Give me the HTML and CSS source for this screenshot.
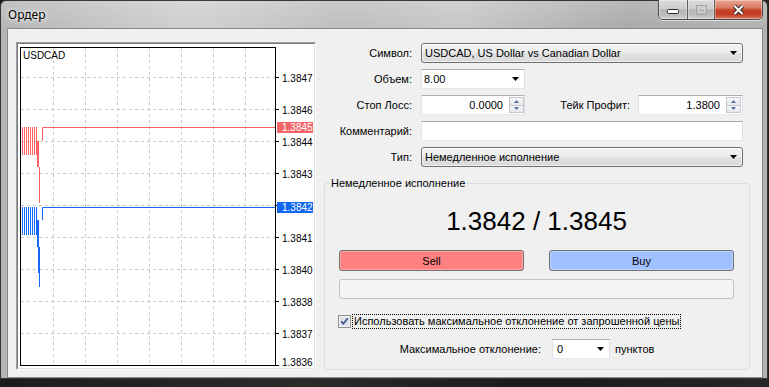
FILE: index.html
```html
<!DOCTYPE html>
<html lang="ru">
<head>
<meta charset="utf-8">
<title>Ордер</title>
<link rel="stylesheet" href="styles.css">
</head>
<body>
<div class="window">
  <div class="titlebar">
    <span class="title">Ордер</span>
    <div class="controls">
      <div class="cbtn cmin"><svg width="12" height="5" viewBox="0 0 12 5"><rect x="0.5" y="0.5" width="11" height="4" rx="1" fill="#fff" stroke="#2b2b2b"/></svg></div>
      <div class="cbtn cmax"><svg width="11" height="10" viewBox="0 0 11 10"><rect x="0.5" y="0.5" width="10" height="9" fill="none" stroke="#a4a4a4"/><rect x="2.5" y="3.5" width="6" height="4" fill="none" stroke="#d2d2d2"/></svg></div>
      <div class="cbtn cclose"><svg width="13" height="12" viewBox="0 0 13 12"><path d="M2.5 2L10.5 10M10.5 2L2.5 10" stroke="#3a2a2a" stroke-width="4"/><path d="M2.5 2L10.5 10M10.5 2L2.5 10" stroke="#fff" stroke-width="2"/></svg></div>
    </div>
  </div>
  <div class="client">
    <div class="chart">
      <div class="chart-inner">
        <svg class="plot" width="296" height="324" viewBox="0 0 296 324">
          <g stroke="#c9c9c9" stroke-dasharray="3 3" fill="none">
            <path d="M3 33.5H257M3 65.5H257M3 97.5H257M3 129.5H257M3 161.5H257M3 193.5H257M3 225.5H257M3 257.5H257M3 289.5H257"/>
            <path d="M35.5 4V321M67.5 4V321M99.5 4V321M131.5 4V321M163.5 4V321M195.5 4V321M227.5 4V321"/>
          </g>
          <rect x="2.5" y="3.5" width="255" height="318" fill="none" stroke="#000"/>
          <path d="M258 33.5H261M258 65.5H261M258 97.5H261M258 129.5H261M258 161.5H261M258 193.5H261M258 225.5H261M258 257.5H261M258 289.5H261M258 321.5H261" stroke="#000"/>
          <g stroke="#ff6262" fill="none">
            <path d="M4.5 83V111M6.5 83V111M8.5 83V111M10.5 83V111M12.5 83V111M14.5 83V111M16.5 83V111M18.5 83V111"/>
            <path d="M257 83.5H24.5V97M19.5 97V123M20.5 97V123M21.5 123V159"/>
          </g>
          <g stroke="#1468f5" fill="none">
            <path d="M4.5 163V191M6.5 163V191M8.5 163V191M10.5 163V191M12.5 163V191M14.5 163V191M16.5 163V191M18.5 163V191"/>
            <path d="M257 163.5H24.5V176M19.5 176V203M20.5 176V229M21.5 203V243"/>
          </g>
          <g class="axis">
            <text x="5" y="15" class="sym">USDCAD</text>
            <text x="264" y="37.5">1.3847</text>
            <text x="264" y="69.5">1.3846</text>
            <text x="264" y="101.5">1.3844</text>
            <text x="264" y="133.5">1.3843</text>
            <text x="264" y="197.5">1.3841</text>
            <text x="264" y="229.5">1.3840</text>
            <text x="264" y="261.5">1.3838</text>
            <text x="264" y="293.5">1.3837</text>
            <text x="264" y="322">1.3836</text>
          </g>
          <rect x="259" y="78" width="36" height="11" fill="#f46666"/>
          <text x="264" y="87" class="tag">1.3845</text>
          <rect x="259" y="158" width="36" height="11" fill="#1068f0"/>
          <text x="264" y="167" class="tag">1.3842</text>
        </svg>
      </div>
    </div>

    <div class="form">
      <div class="row">
        <span class="lbl">Символ:</span>
        <div class="combo f-full"><span class="val">USDCAD, US Dollar vs Canadian Dollar</span><svg class="arrow" width="7" height="4" viewBox="0 0 7 4"><path d="M0 0H7L3.5 4Z" fill="#000"/></svg></div>
      </div>
      <div class="row">
        <span class="lbl">Объем:</span>
        <div class="edit f-vol"><span class="val">8.00</span><svg class="arrow" width="7" height="4" viewBox="0 0 7 4"><path d="M0 0H7L3.5 4Z" fill="#000"/></svg></div>
      </div>
      <div class="row">
        <span class="lbl">Стоп Лосс:</span>
        <div class="edit f-spin">
          <span class="val num">0.0000</span>
          <div class="spin">
            <span class="sbtn"><svg width="5" height="3" viewBox="0 0 5 3"><path d="M0 3H5L2.5 0Z" fill="#5670a0"/></svg></span>
            <span class="sbtn"><svg width="5" height="3" viewBox="0 0 5 3"><path d="M0 0H5L2.5 3Z" fill="#5670a0"/></svg></span>
          </div>
        </div>
        <span class="lbl2">Тейк Профит:</span>
        <div class="edit f-tp">
          <span class="val num">1.3800</span>
          <div class="spin">
            <span class="sbtn"><svg width="5" height="3" viewBox="0 0 5 3"><path d="M0 3H5L2.5 0Z" fill="#5670a0"/></svg></span>
            <span class="sbtn"><svg width="5" height="3" viewBox="0 0 5 3"><path d="M0 0H5L2.5 3Z" fill="#5670a0"/></svg></span>
          </div>
        </div>
      </div>
      <div class="row">
        <span class="lbl">Комментарий:</span>
        <div class="edit f-full"></div>
      </div>
      <div class="row">
        <span class="lbl">Тип:</span>
        <div class="combo f-full"><span class="val">Немедленное исполнение</span><svg class="arrow" width="7" height="4" viewBox="0 0 7 4"><path d="M0 0H7L3.5 4Z" fill="#000"/></svg></div>
      </div>

      <fieldset class="group">
        <legend>Немедленное исполнение</legend>
        <div class="gbody">
          <div class="price">1.3842 / 1.3845</div>
          <div class="trade">
            <div class="btn sell">Sell</div>
            <div class="btn buy">Buy</div>
          </div>
          <div class="status"></div>
          <div class="check-row">
            <svg class="checkbox" width="13" height="13" viewBox="0 0 13 13"><rect x="0.5" y="0.5" width="12" height="12" fill="#f6f6f6" stroke="#8e8f8f"/><rect x="2" y="2" width="9" height="9" fill="#dde2ea"/><path d="M3.2 6.4L5.4 8.8L9.8 3.2" fill="none" stroke="#3f5590" stroke-width="1.7"/></svg>
            <span class="check-label">Использовать максимальное отклонение от запрошенной цены</span>
          </div>
          <div class="dev-row">
            <span class="dev-lbl">Максимальное отклонение:</span>
            <div class="edit f-dev"><span class="val">0</span><svg class="arrow" width="7" height="4" viewBox="0 0 7 4"><path d="M0 0H7L3.5 4Z" fill="#000"/></svg></div>
            <span class="dev-unit">пунктов</span>
          </div>
        </div>
      </fieldset>
    </div>
  </div>
</div>
</body>
</html>
```

FILE: styles.css
```css
* { box-sizing: border-box; }
html, body { margin: 0; padding: 0; }
body {
  width: 769px;
  height: 387px;
  overflow: hidden;
  background: linear-gradient(90deg, #1c1c1c 0%, #2a2c28 40%, #1a1a1a 70%, #262626 100%);
  font-family: "Liberation Sans", Arial, sans-serif;
  font-size: 11px;
  color: #000;
}
.window {
  width: 768px;
  height: 379px;
  border: 1px solid rgba(20, 20, 20, 0.8);
  border-radius: 6px 6px 0 0;
  background:
    linear-gradient(180deg, rgba(255,255,255,0.18) 0%, rgba(255,255,255,0) 30px),
    linear-gradient(90deg, #b4b4b4 0%, #c2c2c2 12%, #cfcfcf 25%, #bdbdbd 45%, #c6c6c6 60%, #a9a9a9 82%, #b1b1b1 100%);
  display: flex;
  flex-direction: column;
}
.titlebar {
  height: 27px;
  flex: none;
  display: flex;
  justify-content: space-between;
  align-items: flex-start;
}
.title {
  font-family: "Noto Sans", "Open Sans", sans-serif;
  font-size: 12px;
  line-height: 16px;
  padding: 6px 0 0 7px;
  color: #000;
  text-shadow: 0 0 6px #fff, 0 0 3px rgba(255,255,255,0.9);
}
.controls {
  display: flex;
  margin: -1px 4px 0 0;
  height: 20px;
  border: 1px solid #4a4a4a;
  border-top: 0;
  border-radius: 0 0 5px 5px;
  overflow: hidden;
  box-shadow: 0 1px 0 rgba(255,255,255,0.55);
}
.cbtn {
  height: 100%;
  display: flex;
  align-items: center;
  justify-content: center;
  border-left: 1px solid #5f5f5f;
  background: linear-gradient(180deg, #dcdcdc 0%, #cdcdcd 45%, #b4b4b4 52%, #bdbdbd 80%, #d2d2d2 100%);
  box-shadow: inset 0 0 0 1px rgba(255,255,255,0.35);
}
.cbtn:first-child { border-left: 0; }
.cmin { width: 28px; align-items: flex-end; padding-bottom: 5px; }
.cmax { width: 27px; }
.cclose {
  width: 48px;
  background: linear-gradient(180deg, #e9a595 0%, #dc7c67 40%, #c8432a 52%, #c33b22 75%, #dc7a62 100%);
}

.client {
  margin-left: 6px;
  width: 756px;
  height: 350px;
  flex: none;
  border: 1px solid #8a8a8a;
  background: #f0f0f0;
  display: flex;
  align-items: flex-start;
  gap: 8px;
  padding: 13px 0 0 8px;
}

.chart {
  width: 300px;
  height: 328px;
  flex: none;
  border: 1px solid;
  border-color: #a0a0a0 #ffffff #ffffff #a0a0a0;
}
.chart-inner {
  width: 298px;
  height: 326px;
  border: 1px solid;
  border-color: #7a7a7a #e3e3e3 #e3e3e3 #7a7a7a;
  background: #fff;
}
.plot { display: block; }
.axis text, .tag {
  font-family: "Liberation Sans", Arial, sans-serif;
  font-size: 10px;
  fill: #000;
}
.axis .sym { font-size: 10px; }
.tag { fill: #fff; }

.form {
  width: 426px;
  flex: none;
  padding-top: 1px;
  display: flex;
  flex-direction: column;
  gap: 6px;
}
.row {
  display: flex;
  align-items: center;
  height: 20px;
  padding-right: 7px;
}
.lbl {
  width: 88px;
  flex: none;
  text-align: right;
  margin-right: 9px;
  white-space: nowrap;
}
.lbl2 {
  flex: 1;
  text-align: right;
  margin-right: 8px;
  white-space: nowrap;
}
.combo {
  height: 20px;
  border: 1px solid #707070;
  border-radius: 3px;
  background: linear-gradient(180deg, #f4f4f4 0%, #ececec 50%, #e2e2e2 52%, #d9d9d9 100%);
  box-shadow: inset 0 0 0 1px rgba(255,255,255,0.6);
  display: flex;
  align-items: center;
  padding: 0 5px 0 3px;
}
.edit {
  height: 20px;
  border: 1px solid;
  border-color: #abadb3 #dbdfe6 #e3e9ef #e2e3ea;
  background: #fff;
  display: flex;
  align-items: center;
  padding: 0 5px 0 2px;
  white-space: nowrap;
}
.val { flex: 1; white-space: nowrap; overflow: hidden; }
.val.num { text-align: right; padding-right: 6px; }
.arrow { flex: none; display: block; }
.f-full { width: 322px; }
.f-vol { width: 104px; }
.f-spin { width: 104px; padding-right: 0; }
.f-tp { width: 105px; padding-right: 1px; }
.f-dev { width: 58px; padding-left: 4px; }

.spin {
  width: 15px;
  height: 16px;
  flex: none;
  display: flex;
  flex-direction: column;
}
.sbtn {
  flex: 1;
  display: flex;
  align-items: center;
  justify-content: center;
  border: 1px solid #c5c7cc;
  background: linear-gradient(180deg, #f8f8f8, #e4e6ea);
}
.sbtn + .sbtn { border-top: 0; }
.sbtn svg { display: block; }

.group {
  margin: 4px 0 0 0;
  padding: 0;
  width: 426px;
  min-width: 0;
  border: 1px solid #d5dfe5;
  border-radius: 3px;
}
.group legend {
  margin-left: 5px;
  padding: 0 1px;
  font-size: 11px;
  line-height: 13px;
}
.gbody {
  padding: 16px 15px 10px 14px;
}
.price {
  font-family: "Liberation Sans", Arial, sans-serif;
  font-size: 26px;
  line-height: 30px;
  text-align: center;
}
.trade {
  display: flex;
  gap: 25px;
  margin-top: 14px;
}
.btn {
  flex: 1;
  height: 21px;
  border: 1px solid #707070;
  border-radius: 3px;
  display: flex;
  align-items: center;
  justify-content: center;
  box-shadow: inset 0 0 0 1px rgba(255,255,255,0.3);
}
.sell { background: #ff8080; }
.buy { background: #a0c0ff; }
.status {
  margin-top: 8px;
  height: 20px;
  border: 1px solid #c2c2c2;
  border-radius: 3px;
  background: #f4f4f4;
}
.check-row {
  margin-top: 14px;
  height: 16px;
  display: flex;
  align-items: center;
}
.checkbox {
  display: block;
  flex: none;
  margin-left: -1px;
  margin-right: 1px;
}
.check-label {
  display: inline-block;
  line-height: 13px;
  border: 1px dotted #000;
  padding: 0 1px;
  white-space: nowrap;
}
.dev-row {
  margin-top: 10px;
  height: 20px;
  display: flex;
  align-items: center;
}
.dev-lbl {
  width: 202px;
  flex: none;
  text-align: right;
  margin-right: 11px;
  white-space: nowrap;
}
.dev-unit { margin-left: 5px; }
```
